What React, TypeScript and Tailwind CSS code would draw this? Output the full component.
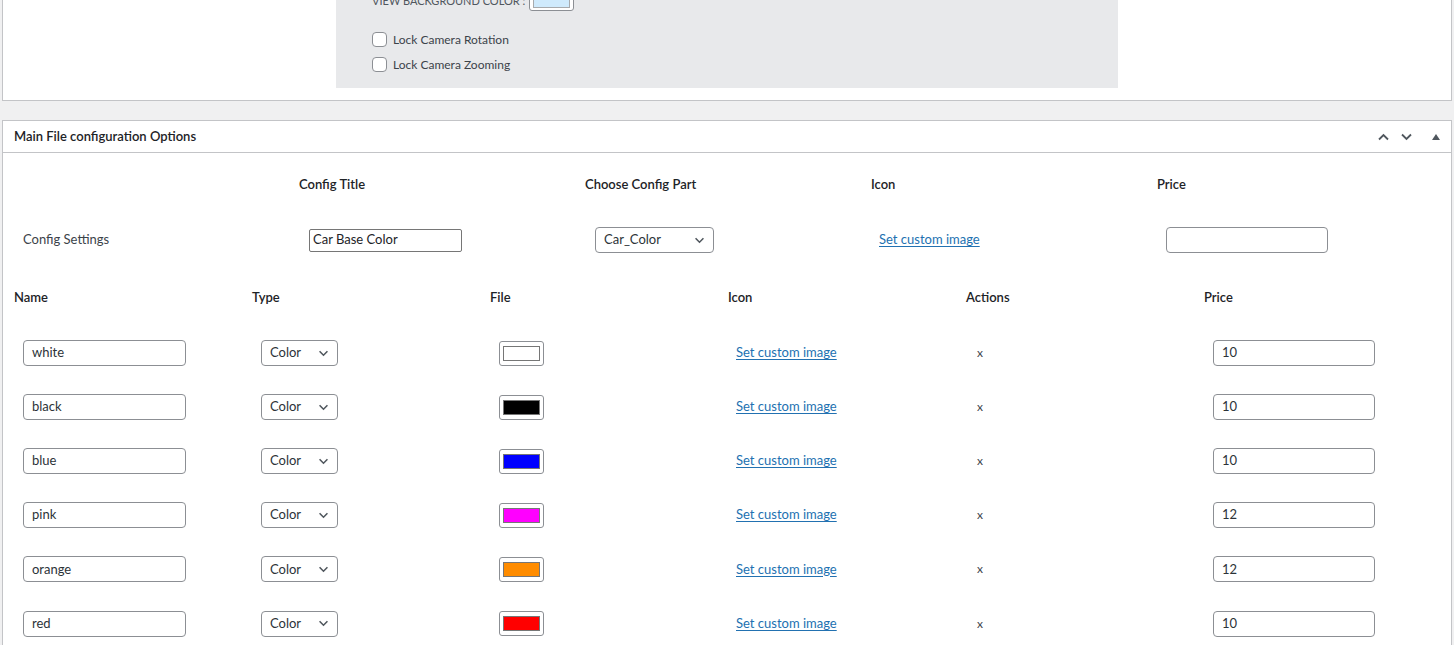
import { useState } from 'react';

type Option = { name: string; color: string; price: string };

const options: Option[] = [
  { name: 'white', color: '#ffffff', price: '10' },
  { name: 'black', color: '#000000', price: '10' },
  { name: 'blue', color: '#0000ff', price: '10' },
  { name: 'pink', color: '#ff00ff', price: '12' },
  { name: 'orange', color: '#ff8c00', price: '12' },
  { name: 'red', color: '#ff0000', price: '10' },
];

const font = "font-['Segoe_UI','Lato','Noto_Sans',sans-serif]";

function Chevron({ dir = 'down', className = '' }: { dir?: 'up' | 'down'; className?: string }) {
  return (
    <svg width="12" height="8" viewBox="0 0 12 8" className={className}>
      <path
        d={dir === 'down' ? 'M1.5 1.5 L6 6 L10.5 1.5' : 'M1.5 6.5 L6 2 L10.5 6.5'}
        fill="none"
        stroke="currentColor"
        strokeWidth="1.8"
      />
    </svg>
  );
}

function FakeSelect({ value, width }: { value: string; width: string }) {
  return (
    <div className={`${width} h-[26px] flex items-center justify-between pl-[8px] pr-[8px] bg-white border border-[#8c8f94] rounded-[4px] text-[13px] text-[#2c3338]`}>
      <span>{value}</span>
      <Chevron className="text-[#50575e] w-[11px] h-[7px]" />
    </div>
  );
}

function TextBox({ value, width }: { value: string; width: string }) {
  return (
    <div className={`${width} h-[26px] flex items-center px-[8px] bg-white border border-[#8c8f94] rounded-[4px] text-[13px] text-[#2c3338]`}>
      {value}
    </div>
  );
}

function Swatch({ color }: { color: string }) {
  return (
    <div className="w-[45px] h-[25px] flex items-center justify-center bg-white border border-[#8c8f94] rounded-[3px]">
      <div className="w-[37px] h-[15px] border border-[#767676]" style={{ backgroundColor: color }} />
    </div>
  );
}

function CheckRow({ label }: { label: string }) {
  const [checked, setChecked] = useState(false);
  return (
    <label className="flex items-center gap-[6px] h-[25px] text-[12px] text-[#3c434a] cursor-pointer">
      <span
        onClick={() => setChecked(!checked)}
        className="w-[15px] h-[15px] rounded-[4px] border border-[#8c8f94] bg-white flex items-center justify-center"
      >
        {checked && <span className="w-[7px] h-[7px] bg-[#2271b1]" />}
      </span>
      {label}
    </label>
  );
}

const link = 'text-[13px] text-[#2271b1] underline underline-offset-[2px]';
const th = 'text-[13px] font-semibold text-[#1d2327]';

export default function App() {
  return (
    <div className={`${font} bg-[#f0f0f1] min-h-screen overflow-hidden`}>
      {/* viewer settings panel (scrolled partly out of view) */}
      <div className="mx-[2px] -mt-[12px] bg-white border border-[#c3c4c7] pb-[12px]">
        <div className="ml-[333px] w-[782px] bg-[#e8e9eb] pl-[36px] pt-[2px] pb-[11px]">
          <div className="flex items-center gap-[4px] text-[11px] text-[#50575e] uppercase h-[20px]">
            <span>View background color :</span>
            <div className="w-[45px] h-[20px] bg-white border border-[#8c8f94] rounded-[3px] flex items-center justify-center">
              <div className="w-[37px] h-[13px] bg-[#cfeafc] border border-[#a7aaad]" />
            </div>
          </div>
          <div className="mt-[16px] flex flex-col">
            <CheckRow label="Lock Camera Rotation" />
            <CheckRow label="Lock Camera Zooming" />
          </div>
        </div>
      </div>

      {/* main file configuration panel */}
      <div className="mx-[2px] mt-[19px] bg-white border border-[#c3c4c7]">
        <div className="h-[32px] flex items-center justify-between pl-[11px] pr-[11px] border-b border-[#c3c4c7]">
          <h2 className="text-[13px] font-semibold text-[#1d2327]">Main File configuration Options</h2>
          <div className="flex items-center text-[#50575e]">
            <Chevron dir="up" className="w-[13px] h-[8px]" />
            <Chevron dir="down" className="ml-[10px] w-[13px] h-[8px]" />
            <svg width="8" height="6" viewBox="0 0 8 6" className="ml-[19px]">
              <path d="M4 0 L8 6 L0 6 Z" fill="currentColor" />
            </svg>
          </div>
        </div>

        {/* config header table */}
        <div className="grid grid-cols-[286px_286px_286px_286px_1fr]">
          <div className="h-[64px]" />
          <div className={`h-[64px] flex items-center pl-[10px] ${th}`}>Config Title</div>
          <div className={`h-[64px] flex items-center pl-[10px] ${th}`}>Choose Config Part</div>
          <div className={`h-[64px] flex items-center pl-[10px] ${th}`}>Icon</div>
          <div className={`h-[64px] flex items-center pl-[10px] ${th}`}>Price</div>

          <div className="h-[46px] flex items-center pl-[20px] text-[13px] text-[#3c434a]">Config Settings</div>
          <div className="h-[46px] flex items-center pl-[20px]">
            <div className="w-[153px] h-[23px] flex items-center px-[3px] border border-[#767676] rounded-[2px] text-[13px] text-[#1d2327]">
              Car Base Color
            </div>
          </div>
          <div className="h-[46px] flex items-center pl-[20px]">
            <FakeSelect value="Car_Color" width="w-[119px]" />
          </div>
          <div className="h-[46px] flex items-center pl-[18px]">
            <span className={link}>Set custom image</span>
          </div>
          <div className="h-[46px] flex items-center pl-[19px]">
            <TextBox value="" width="w-[162px]" />
          </div>
        </div>

        {/* per-option table */}
        <div className="mt-[8px] pl-[1px] grid grid-cols-[238px_238px_238px_238px_238px_1fr]">
          {['Name', 'Type', 'File', 'Icon', 'Actions', 'Price'].map((h) => (
            <div key={h} className={`h-[55px] pb-[1px] flex items-center pl-[10px] ${th}`}>
              {h}
            </div>
          ))}
          {options.map((o, i) => (
            <div key={o.name} className="contents">
              {[0, 1, 2, 3, 4, 5].map((c) => {
                const h = i >= 4 ? 'h-[54.5px]' : 'h-[54px]';
                if (c === 0)
                  return (
                    <div key={c} className={`${h} flex items-center pl-[19px]`}>
                      <TextBox value={o.name} width="w-[163px]" />
                    </div>
                  );
                if (c === 1)
                  return (
                    <div key={c} className={`${h} flex items-center pl-[19px]`}>
                      <FakeSelect value="Color" width="w-[77px]" />
                    </div>
                  );
                if (c === 2)
                  return (
                    <div key={c} className={`${h} flex items-center pl-[19px]`}>
                      <Swatch color={o.color} />
                    </div>
                  );
                if (c === 3)
                  return (
                    <div key={c} className={`${h} flex items-center pl-[18px]`}>
                      <span className={link}>Set custom image</span>
                    </div>
                  );
                if (c === 4)
                  return (
                    <div key={c} className={`${h} flex items-center pl-[21px] text-[12px] text-[#3c434a]`}>
                      x
                    </div>
                  );
                return (
                  <div key={c} className={`${h} flex items-center pl-[19px]`}>
                    <TextBox value={o.price} width="w-[162px]" />
                  </div>
                );
              })}
            </div>
          ))}
        </div>
      </div>
    </div>
  );
}
